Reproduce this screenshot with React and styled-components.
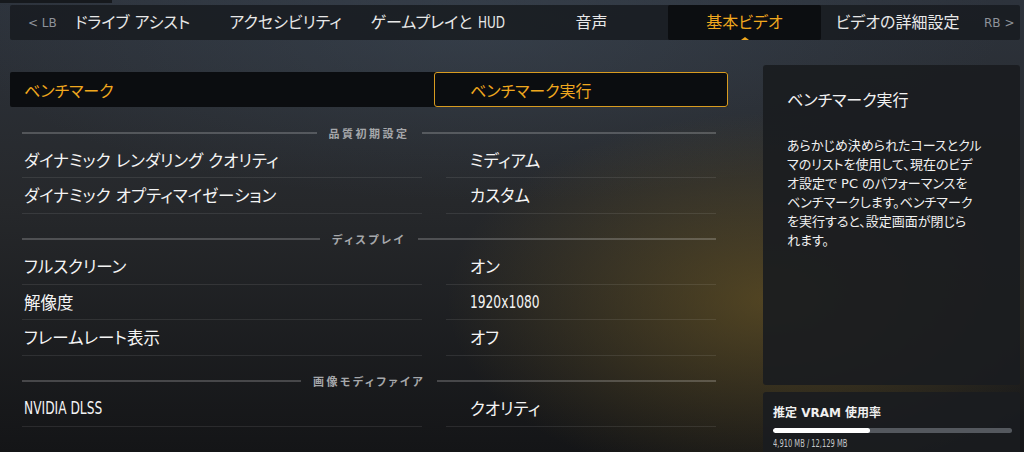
import React from 'react';
import styled, {createGlobalStyle} from 'styled-components';

const ORANGE = '#f0a81e';

const GlobalStyle = createGlobalStyle`
  html, body {
    margin: 0;
    padding: 0;
    background: #141618;
  }
  * {
    box-sizing: border-box;
  }
`;

const Screen = styled.div`
  width: 1024px;
  height: 452px;
  overflow: hidden;
  padding: 0 4px 0 10px;
  color: #ececec;
  font-family: 'DejaVu Sans', 'Noto Sans CJK JP', sans-serif;
  font-feature-settings: 'palt';
  background:
    radial-gradient(ellipse 430px 250px at 770px 300px, rgba(118, 94, 34, 0.58), rgba(118, 94, 34, 0) 75%),
    radial-gradient(ellipse 520px 170px at 480px 30px, rgba(70, 84, 100, 0.35), rgba(70, 84, 100, 0)),
    linear-gradient(180deg, #2d333c 0%, #26282b 45%, #141517 100%);
`;

/* the game's condensed latin face, approximated by squeezing DejaVu */
const Narrow = styled.span`
  display: inline-block;
  font-family: 'DejaVu Sans', sans-serif;
  font-size: ${p => p.$size || 'inherit'};
  transform: scaleX(${p => p.$scale || 0.72});
  transform-origin: left center;
  margin-left: ${p => p.$gap || 0}px;
  margin-right: ${p => p.$pull || 0}px;
`;

const TopStub = styled.div`
  width: 112px;
  height: 3px;
  margin-left: -10px;
  background: #16191d;
`;

const NavBar = styled.nav`
  margin-top: 2px;
  height: 35px;
  display: flex;
  align-items: center;
  padding: 0 16px 0 18px;
  background: rgba(24, 27, 32, 0.85);
  border-radius: 2px;
`;

const Bumper = styled.span`
  font-size: 12px;
  color: #8e939a;
  width: 20px;
  flex: none;
  white-space: nowrap;
`;

const Tabs = styled.div`
  display: flex;
  height: 100%;
  margin: 0 10px 0 8px;
`;

const Tab = styled.div`
  position: relative;
  width: 153px;
  height: 100%;
  display: flex;
  align-items: center;
  justify-content: center;
  font-size: 16px;
  white-space: nowrap;
  color: ${p => (p.$active ? ORANGE : '#e8e8e8')};
  background: ${p => (p.$active ? '#0c0e11' : 'transparent')};
  border-radius: 2px;
`;

const TabText = styled.span`
  line-height: 20px;
`;

const Caret = styled.span`
  position: absolute;
  left: 50%;
  bottom: 0;
  margin-left: -4px;
  width: 0;
  height: 0;
  border-left: 4px solid transparent;
  border-right: 4px solid transparent;
  border-bottom: 3px solid ${ORANGE};
`;

const Body = styled.div`
  display: flex;
  margin-top: 25px;
`;

const Main = styled.section`
  width: 718px;
  padding-top: 7px;
`;

const BenchRow = styled.div`
  height: 35px;
  display: grid;
  grid-template-columns: 424px 294px;
  background: #0b0d10;
  border-radius: 2px;
`;

const BenchLabel = styled.div`
  display: flex;
  align-items: center;
  padding-left: 14px;
  font-size: 16px;
  color: ${ORANGE};
`;

const BenchButton = styled.button`
  display: flex;
  align-items: center;
  padding: 0 0 0 35px;
  font: inherit;
  font-size: 16px;
  color: ${ORANGE};
  background: #0b0d10;
  border: 1px solid #d89b20;
  border-radius: 3px;
`;

const Settings = styled.div`
  padding: 0 12px;
`;

const SectionHead = styled.div`
  margin-top: 15.5px;
  height: 20px;
  display: flex;
  align-items: center;
  gap: 12px;
  font-size: 11px;
  font-weight: 700;
  letter-spacing: 2.5px;
  color: #a6a8ab;
  white-space: nowrap;

  &::before,
  &::after {
    content: '';
    flex: 1;
    height: 2px;
    background: rgba(255, 255, 255, 0.2);
  }
`;

const Row = styled.div`
  display: grid;
  grid-template-columns: 400px 270px;
  column-gap: 24px;
`;

const Cell = styled.div`
  height: 35.5px;
  display: flex;
  align-items: center;
  padding-left: ${p => (p.$value ? '24px' : '2px')};
  font-size: 16.5px;
  color: #f4f4f4;
  white-space: nowrap;
  border-bottom: 1px solid rgba(255, 255, 255, 0.09);
`;

const Side = styled.aside`
  width: 257px;
  margin-left: 35px;
  display: flex;
  flex-direction: column;
  gap: 7px;
`;

const InfoCard = styled.div`
  height: 320px;
  padding: 26px 18px 0 24px;
  background: rgba(26, 28, 32, 0.92);
  border-radius: 3px;
`;

const InfoTitle = styled.h2`
  margin: 0;
  font-size: 16px;
  font-weight: 400;
  line-height: 20px;
  color: #f2f2f2;
`;

const InfoText = styled.p`
  margin: 25px 0 0;
  font-size: 13px;
  line-height: 19px;
  color: #f0f0f0;
  white-space: nowrap;
`;

const VramCard = styled.div`
  height: 70px;
  padding: 14px 8px 0 10px;
  background: rgba(26, 28, 32, 0.92);
  border-radius: 3px;
`;

const VramLabel = styled.div`
  font-size: 12px;
  font-weight: 700;
  line-height: 14px;
  color: #f0f0f0;
`;

const Bar = styled.div`
  margin-top: 8px;
  height: 5px;
  background: #54585e;
  border-radius: 3px;
  overflow: hidden;
`;

const BarFill = styled.div`
  height: 100%;
  background: #ffffff;
  border-radius: 3px;
`;

const VramText = styled.div`
  margin-top: 5px;
  font-size: 10.5px;
  line-height: 11px;
  color: #c4c6c9;
  white-space: nowrap;
`;

const tabs = [
  'ドライブ アシスト',
  'アクセシビリティ',
  <>
    ゲームプレイと
    <Narrow $scale={0.75} $gap={6} $pull={-8}>
      HUD
    </Narrow>
  </>,
  '音声',
  '基本ビデオ',
  'ビデオの詳細設定',
];
const ACTIVE_TAB = 4;

const sections = [
  {
    title: '品質初期設定',
    rows: [
      ['ダイナミック レンダリング クオリティ', 'ミディアム'],
      ['ダイナミック オプティマイゼーション', 'カスタム'],
    ],
  },
  {
    title: 'ディスプレイ',
    rows: [
      ['フルスクリーン', 'オン'],
      ['解像度', <Narrow $size="17px">1920x1080</Narrow>],
      ['フレームレート表示', 'オフ'],
    ],
  },
  {
    title: '画像モディファイア',
    rows: [[<Narrow $size="17px">NVIDIA DLSS</Narrow>, 'クオリティ']],
  },
];

const infoLines = [
  'あらかじめ決められたコースとクル',
  'マのリストを使用して、現在のビデ',
  'オ設定で PC のパフォーマンスを',
  'ベンチマークします。ベンチマーク',
  'を実行すると、設定画面が閉じら',
  'れます。',
];

const vramUsed = 4910;
const vramTotal = 12129;

export default function App() {
  return (
    <>
      <GlobalStyle />
      <Screen>
        <TopStub />
        <NavBar>
          <Bumper>&lt; LB</Bumper>
          <Tabs>
            {tabs.map((t, i) => (
              <Tab key={i} $active={i === ACTIVE_TAB}>
                <TabText>{t}</TabText>
                {i === ACTIVE_TAB && <Caret />}
              </Tab>
            ))}
          </Tabs>
          <Bumper>RB &gt;</Bumper>
        </NavBar>

        <Body>
          <Main>
            <BenchRow>
              <BenchLabel>ベンチマーク</BenchLabel>
              <BenchButton>ベンチマーク実行</BenchButton>
            </BenchRow>
            <Settings>
              {sections.map(s => (
                <React.Fragment key={s.title}>
                  <SectionHead>{s.title}</SectionHead>
                  {s.rows.map(([label, value], i) => (
                    <Row key={i}>
                      <Cell>{label}</Cell>
                      <Cell $value>{value}</Cell>
                    </Row>
                  ))}
                </React.Fragment>
              ))}
            </Settings>
          </Main>

          <Side>
            <InfoCard>
              <InfoTitle>ベンチマーク実行</InfoTitle>
              <InfoText>
                {infoLines.map((line, i) => (
                  <React.Fragment key={line}>
                    {line}
                    {i < infoLines.length - 1 && <br />}
                  </React.Fragment>
                ))}
              </InfoText>
            </InfoCard>
            <VramCard>
              <VramLabel>推定 VRAM 使用率</VramLabel>
              <Bar>
                <BarFill style={{width: `${(vramUsed / vramTotal) * 100}%`}} />
              </Bar>
              <VramText>
                <Narrow $scale={0.64}>4,910 MB / 12,129 MB</Narrow>
              </VramText>
            </VramCard>
          </Side>
        </Body>
      </Screen>
    </>
  );
}
